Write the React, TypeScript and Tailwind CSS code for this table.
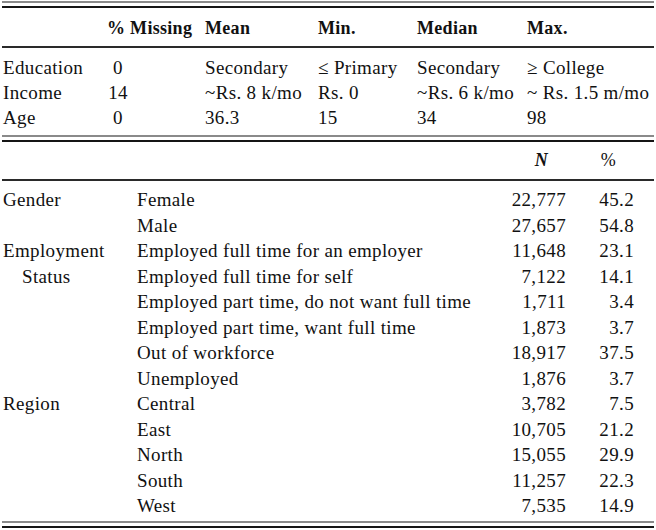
const summary = [
  { label: 'Education', missing: '0', mean: 'Secondary', min: '≤ Primary', median: 'Secondary', max: '≥ College' },
  { label: 'Income', missing: '14', mean: '~Rs. 8 k/mo', min: 'Rs. 0', median: '~Rs. 6 k/mo', max: '~ Rs. 1.5 m/mo' },
  { label: 'Age', missing: '0', mean: '36.3', min: '15', median: '34', max: '98' },
];

const breakdown = [
  { group: 'Gender', item: 'Female', n: '22,777', pct: '45.2' },
  { group: '', item: 'Male', n: '27,657', pct: '54.8' },
  { group: 'Employment', item: 'Employed full time for an employer', n: '11,648', pct: '23.1' },
  { group: 'Status', indent: true, item: 'Employed full time for self', n: '7,122', pct: '14.1' },
  { group: '', item: 'Employed part time, do not want full time', n: '1,711', pct: '3.4' },
  { group: '', item: 'Employed part time, want full time', n: '1,873', pct: '3.7' },
  { group: '', item: 'Out of workforce', n: '18,917', pct: '37.5' },
  { group: '', item: 'Unemployed', n: '1,876', pct: '3.7' },
  { group: 'Region', item: 'Central', n: '3,782', pct: '7.5' },
  { group: '', item: 'East', n: '10,705', pct: '21.2' },
  { group: '', item: 'North', n: '15,055', pct: '29.9' },
  { group: '', item: 'South', n: '11,257', pct: '22.3' },
  { group: '', item: 'West', n: '7,535', pct: '14.9' },
];

function DoubleRule({ className = '' }: { className?: string }) {
  return (
    <div className={className}>
      <div className="h-[2px] bg-[#8a8a8a]" />
      <div className="h-[2px] mt-[3px] bg-[#151515]" />
    </div>
  );
}

export default function App() {
  return (
    <div className="w-[656px] h-[530px] bg-white px-[2px] pt-[1px] text-[#111] font-['Liberation_Serif',serif] text-[19px] tracking-[0.35px] overflow-hidden">
      <DoubleRule />

      {/* summary table */}
      <div className="h-[38px] pt-[3px] flex items-center pl-[1px] text-[18px] font-bold tracking-[0.3px]">
        <div className="w-[104px]" />
        <div className="w-[98px]">% Missing</div>
        <div className="w-[113px]">Mean</div>
        <div className="w-[99px]">Min.</div>
        <div className="w-[110px]">Median</div>
        <div className="flex-1">Max.</div>
      </div>
      <div className="h-[2px] bg-[#2a2a2a]" />
      <div className="pt-[7px]">
        {summary.map((r) => (
          <div key={r.label} className="h-[25px] leading-[25px] flex pl-[1px] whitespace-nowrap">
            <div className="w-[104px]">{r.label}</div>
            <div className="w-[98px]">
              <div className="w-[22px] text-center">{r.missing}</div>
            </div>
            <div className="w-[113px]">{r.mean}</div>
            <div className="w-[99px]">{r.min}</div>
            <div className="w-[110px]">{r.median}</div>
            <div className="flex-1">{r.max}</div>
          </div>
        ))}
      </div>

      <DoubleRule className="mt-[5px]" />

      {/* breakdown table */}
      <div className="h-[37px] flex items-center text-[18px] font-bold">
        <div className="flex-1" />
        <div className="w-[80px] text-right pr-[18px] italic">N</div>
        <div className="w-[68px] text-right pr-[18px] font-normal">%</div>
        <div className="w-[20px]" />
      </div>
      <div className="h-[2px] bg-[#2a2a2a]" />
      <div className="pt-[6px]">
        {breakdown.map((r) => (
          <div key={r.item} className="h-[25.5px] leading-[25.5px] flex pl-[1px] whitespace-nowrap">
            <div className={r.indent ? 'w-[134px] pl-[19px]' : 'w-[134px]'}>{r.group}</div>
            <div className="flex-1">{r.item}</div>
            <div className="w-[80px] text-right">{r.n}</div>
            <div className="w-[68px] text-right">{r.pct}</div>
            <div className="w-[20px]" />
          </div>
        ))}
      </div>

      <DoubleRule className="mt-[2px]" />
    </div>
  );
}
